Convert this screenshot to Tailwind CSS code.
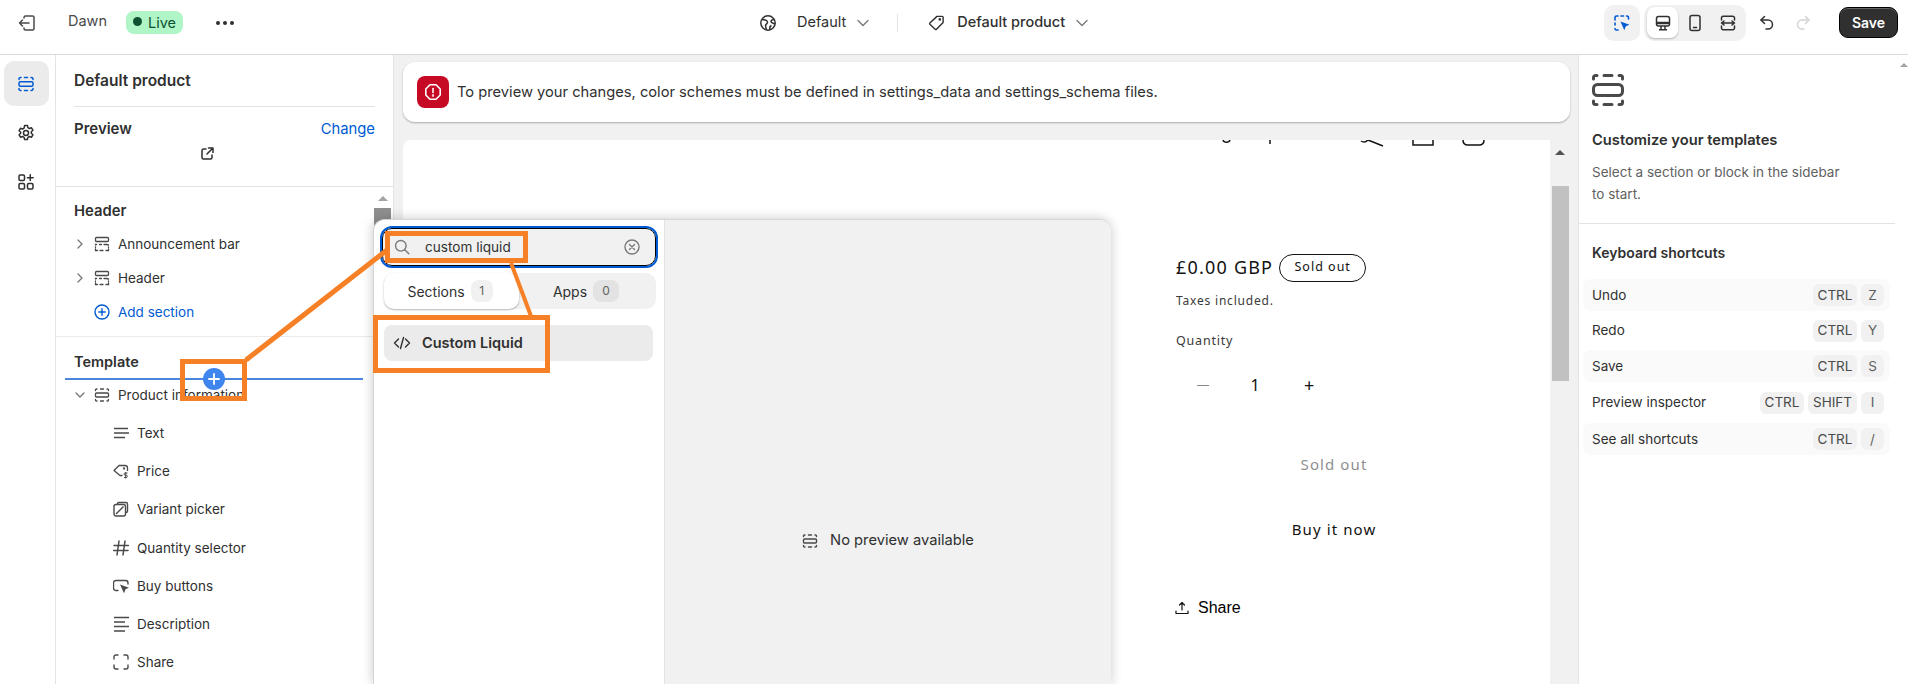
<!DOCTYPE html>
<html lang="en">
<head>
    <meta charset="UTF-8">
    <title>Theme editor</title>
    <script src="https://cdn.jsdelivr.net/npm/@tailwindcss/browser@4"></script>
</head>
<body class="w-[1908px] h-[684px] overflow-hidden bg-white font-['Inter','Liberation_Sans',sans-serif] text-[13.500px] text-[#303030]">

<div class="relative w-[1908px] h-[684px] overflow-hidden">
    <!-- Top bar -->
    <header class="flex items-center h-[55px] pb-[9px] pr-[10px] border-b border-[#d9d9d9] bg-white text-[14.500px]">
        <svg class="ml-[17px] w-[20px] h-[20px]" viewBox="0 0 20 20" fill="none" stroke="#4a4a4a" stroke-width="1.5" stroke-linecap="round" stroke-linejoin="round"><path d="M7 5V4.500A1.500 1.500 0 0 1 8.500 3h7A1.500 1.500 0 0 1 17 4.500v11a1.500 1.500 0 0 1-1.500 1.500h-7A1.500 1.500 0 0 1 7 15.500V15"/><path d="M12 10H2.500M5.500 7l-3 3 3 3"/></svg>
        <span class="ml-[31px] w-[39px] -mt-[3px] text-[#4a4a4a]">Dawn</span>
        <span class="ml-[19px] flex items-center gap-[6px] h-[23px] w-[57px] pl-[7px] rounded-[8px] bg-[#aff5c6] text-[#0c5132]"><i class="w-[9px] h-[9px] rounded-full bg-[#0c5132] -mt-[2px]"></i><span class="mt-[1px]">Live</span></span>
        <span class="ml-[33px] flex gap-[3px]"><i class="w-[4px] h-[4px] rounded-full bg-[#303030]"></i><i class="w-[4px] h-[4px] rounded-full bg-[#303030]"></i><i class="w-[4px] h-[4px] rounded-full bg-[#303030]"></i></span>

        <svg class="ml-[525px] w-[18px] h-[18px]" viewBox="0 0 18 18" fill="none" stroke="#303030" stroke-width="1.500"><circle cx="9" cy="9" r="7.200"/><path d="M3 5.500c2.500 0 5 1 5.500 2.500S6.500 10 6.500 11.500 7.500 15.500 7.500 16M15.500 5.500c-2 0-3.500.5-3.500 2s3 2 3.800 2.500M11 16c-.5-2 0-4 1.500-4.500"/></svg>
        <span class="ml-[20px] -mt-[2px]">Default</span>
        <svg class="ml-[11px] w-[12px] h-[12px]" viewBox="0 0 12 12" fill="none" stroke="#777" stroke-width="1.300" stroke-linecap="round"><path d="M1 3.500l5 5 5-5"/></svg>
        <i class="ml-[28px] w-px h-[18px] bg-[#e3e3e3]"></i>
        <svg class="ml-[30px] w-[17px] h-[17px]" viewBox="0 0 18 18" fill="none" stroke="#303030" stroke-width="1.500" stroke-linejoin="round"><path d="M2 9.500 9.500 2.500H15a1 1 0 0 1 1 1V9l-7 7.200a1 1 0 0 1-1.400 0L2 10.800a1 1 0 0 1 0-1.300z"/><circle cx="12.500" cy="5.700" r=".6"/></svg>
        <span class="ml-[12px] -mt-[2px] font-medium">Default product</span>
        <svg class="ml-[11px] w-[12px] h-[12px]" viewBox="0 0 12 12" fill="none" stroke="#777" stroke-width="1.300" stroke-linecap="round"><path d="M1 3.500l5 5 5-5"/></svg>

        <div class="ml-auto flex items-center justify-center w-[36px] h-[36px] rounded-[10px] bg-[#f1f1f1]">
            <svg class="w-[18px] h-[18px]" viewBox="0 0 18 18" fill="none"><path d="M2 6V3.500A1.500 1.500 0 0 1 3.500 2H5M8 2h2.500M13.500 2h.5a1.500 1.500 0 0 1 1.500 1.500V5M2 9v2M2 14.500A1.500 1.500 0 0 0 3.500 16H5" stroke="#005bd3" stroke-width="1.600" stroke-linecap="round"/><path d="M7.500 7.500l9 3.300-3.700 1.500-1.500 3.900z" fill="#005bd3"/></svg>
        </div>
        <div class="ml-[4px] flex items-center w-[102px] h-[36px] px-[3px] rounded-[10px] bg-[#f1f1f1]">
            <div class="flex items-center justify-center w-[31px] h-[31px] rounded-[8px] bg-white shadow-[0_1px_2px_rgba(0,0,0,0.25)]">
                <svg class="w-[18px] h-[18px]" viewBox="0 0 18 18" fill="none" stroke="#303030" stroke-width="1.500" stroke-linejoin="round"><rect x="2.500" y="2.500" width="13" height="9.500" rx="2"/><path d="M2.500 9h13" stroke-width="2.500"/><path d="M7 12v3.200M11 12v3.200M5 15.700h8"/></svg>
            </div>
            <div class="flex items-center justify-center w-[34px]">
                <svg class="w-[18px] h-[18px]" viewBox="0 0 18 18" fill="none" stroke="#303030" stroke-width="1.500" stroke-linecap="round"><rect x="4" y="1.500" width="10" height="15" rx="2"/><path d="M7.500 13.500h3"/></svg>
            </div>
            <div class="flex items-center justify-center w-[31px]">
                <svg class="w-[18px] h-[18px]" viewBox="0 0 18 18" fill="none" stroke="#303030" stroke-width="1.500" stroke-linecap="round" stroke-linejoin="round"><path d="M2.500 6V4A1.800 1.800 0 0 1 4.300 2.200h9.400A1.800 1.800 0 0 1 15.500 4v2M2.500 12v2a1.800 1.800 0 0 0 1.800 1.800h9.400a1.800 1.800 0 0 0 1.800-1.800v-2"/><path d="M2.500 9h13M5 7l-2.500 2L5 11M13 7l2.500 2-2.500 2"/></svg>
            </div>
        </div>
        <svg class="ml-[12px] w-[18px] h-[18px]" viewBox="0 0 18 18" fill="none" stroke="#303030" stroke-width="1.500" stroke-linecap="round" stroke-linejoin="round"><path d="M6.500 2.500 3 6l3.500 3.500"/><path d="M3 6h7a4.500 4.500 0 0 1 0 9H8"/></svg>
        <svg class="ml-[18px] w-[18px] h-[18px]" viewBox="0 0 18 18" fill="none" stroke="#d4d4d4" stroke-width="1.500" stroke-linecap="round" stroke-linejoin="round"><path d="M11.500 2.500 15 6l-3.500 3.500"/><path d="M15 6H8a4.500 4.500 0 0 0 0 9h2"/></svg>
        <button class="ml-[27px] w-[59px] h-[31px] rounded-[9px] bg-[#303030] border border-black text-[14px] text-white font-semibold shadow-[inset_0_1px_0_rgba(255,255,255,0.25)]">Save</button>
    </header>

    <div class="flex h-[629px]">
        <!-- Icon rail -->
        <nav class="w-[56px] shrink-0 border-r border-[#e3e3e3] flex flex-col items-center pt-[6px] pr-[3px] gap-[4px]">
            <div class="flex items-center justify-center w-[45px] h-[45px] rounded-[10px] bg-[#ebebeb]">
                <svg class="w-[18px] h-[18px]" viewBox="0 0 18 18" fill="none" stroke="#005bd3" stroke-width="1.500" stroke-linecap="round"><path d="M2 4.500V4a1.500 1.500 0 0 1 1.500-1.500H4M7.500 2.500h3M14 2.500h.5A1.500 1.500 0 0 1 16 4v.5M2 13.500v.5a1.500 1.500 0 0 0 1.500 1.500H4M7.500 15.500h3M14 15.500h.5A1.500 1.500 0 0 0 16 14v-.5"/><rect x="2" y="6.800" width="14" height="4.400" rx="1.500"/></svg>
            </div>
            <div class="flex items-center justify-center w-[45px] h-[45px]">
                <svg class="w-[18px] h-[18px]" viewBox="0 0 18 18" fill="none" stroke="#303030" stroke-width="1.500" stroke-linejoin="round"><circle cx="9" cy="9" r="2.500"/><path d="M7.600 1.500h2.800l.5 2.200 1.500.8 2.100-.7 1.400 2.400-1.600 1.500v1.600l1.600 1.500-1.400 2.400-2.100-.7-1.500.8-.5 2.200H7.600l-.5-2.200-1.500-.8-2.100.7-1.400-2.400 1.600-1.500V8.200L2.100 6.700l1.400-2.400 2.100.7 1.500-.8z"/></svg>
            </div>
            <div class="flex items-center justify-center w-[45px] h-[45px]">
                <svg class="w-[18px] h-[18px]" viewBox="0 0 18 18" fill="none" stroke="#303030" stroke-width="1.500" stroke-linecap="round"><rect x="2" y="2" width="5.500" height="5.500" rx="1.200"/><rect x="2" y="10.500" width="5.500" height="5.500" rx="1.200"/><rect x="10.500" y="10.500" width="5.500" height="5.500" rx="1.200"/><path d="M13.250 1.800v5.700M10.400 4.650h5.700"/></svg>
            </div>
        </nav>

        <!-- Sidebar -->
        <aside class="relative w-[338px] shrink-0 border-r border-[#e3e3e3] bg-white">
            <div class="mx-[18px] h-[52px] border-b border-[#e3e3e3] pt-[17px] text-[15.500px] font-semibold leading-[18px]">Default product</div>
            <div class="h-[80px] border-b border-[#e3e3e3] px-[18px] pt-[14px] w-[337px]">
                <div class="flex justify-between font-semibold leading-[16px]"><span class="text-[15px]">Preview</span><span class="font-normal text-[14.800px] text-[#005bd3]">Change</span></div>
                <svg class="ml-[126px] mt-[9px] w-[15px] h-[15px]" viewBox="0 0 15 15" fill="none" stroke="#303030" stroke-width="1.500" stroke-linecap="round" stroke-linejoin="round"><path d="M6 3H3.500A1.500 1.500 0 0 0 2 4.500v7A1.500 1.500 0 0 0 3.500 13h7a1.500 1.500 0 0 0 1.500-1.500V9"/><path d="M7 8l6-6M8.500 2H13v4.500"/></svg>
            </div>
            <div class="h-[150px] border-b border-[#ebebeb]">
                <div class="px-[18px] pt-[15px] font-semibold text-[14.800px] leading-[18px]">Header</div>
                <div class="flex items-center h-[34px] mt-[7px] pl-[19px]">
                    <svg class="w-[10px] h-[10px]" viewBox="0 0 10 10" fill="none" stroke="#777" stroke-width="1.300" stroke-linecap="round"><path d="M3 1l4 4-4 4"/></svg>
                    <svg class="ml-[9px] w-[16px] h-[16px]" viewBox="0 0 16 16" fill="none" stroke="#4a4a4a" stroke-width="1.300" stroke-linecap="round"><rect x="1.500" y="1.500" width="13" height="4" rx="1"/><path d="M1.500 9V8.500h1M5.500 8.500h2M10 8.500h2.500l2 .5M1.500 13v1.500h2M6 14.500h3M12 14.500h2.500V13M1.500 11v.5M14.500 11v.5"/></svg>
                    <span class="ml-[8px]">Announcement bar</span>
                </div>
                <div class="flex items-center h-[34px] pl-[19px]">
                    <svg class="w-[10px] h-[10px]" viewBox="0 0 10 10" fill="none" stroke="#777" stroke-width="1.300" stroke-linecap="round"><path d="M3 1l4 4-4 4"/></svg>
                    <svg class="ml-[9px] w-[16px] h-[16px]" viewBox="0 0 16 16" fill="none" stroke="#4a4a4a" stroke-width="1.300" stroke-linecap="round"><rect x="1.500" y="1.500" width="13" height="4" rx="1"/><path d="M1.500 9V8.500h1M5.500 8.500h2M10 8.500h2.500l2 .5M1.500 13v1.500h2M6 14.500h3M12 14.500h2.500V13M1.500 11v.5M14.500 11v.5"/></svg>
                    <span class="ml-[8px]">Header</span>
                </div>
                <div class="flex items-center h-[34px] pl-[38px] text-[#005bd3]">
                    <svg class="w-[16px] h-[16px]" viewBox="0 0 16 16" fill="none" stroke="#005bd3" stroke-width="1.400" stroke-linecap="round"><circle cx="8" cy="8" r="7"/><path d="M8 4.800v6.400M4.800 8h6.400"/></svg>
                    <span class="ml-[8px]">Add section</span>
                </div>
            </div>
            <div class="px-[18px] pt-[16px] font-semibold text-[14.500px] leading-[18px]">Template</div>
            <div class="flex items-center h-[34px] mt-[7px] pl-[19px]">
                <svg class="w-[10px] h-[10px]" viewBox="0 0 10 10" fill="none" stroke="#777" stroke-width="1.300" stroke-linecap="round"><path d="M1 3l4 4 4-4"/></svg>
                <svg class="ml-[9px] w-[16px] h-[16px]" viewBox="0 0 16 16" fill="none" stroke="#4a4a4a" stroke-width="1.300" stroke-linecap="round"><path d="M1.500 3.500V3a1 1 0 0 1 1-1H3M6.500 2h3M13 2h.5a1 1 0 0 1 1 1v.5M1.500 12.500v.5a1 1 0 0 0 1 1H3M6.500 14h3M13 14h.5a1 1 0 0 0 1-1v-.5"/><rect x="1.500" y="6" width="13" height="4" rx="1"/></svg>
                <span class="ml-[8px]">Product information</span>
            </div>
            <ul class="mt-[2px] pl-[57px]">
                <li class="flex items-center h-[38.200px] gap-[8px]"><svg class="w-[16px] h-[16px]" viewBox="0 0 16 16" fill="none" stroke="#4a4a4a" stroke-width="1.500"><path d="M1 3.500h14M1 8h16M1 12.500h11"/></svg>Text</li>
                <li class="flex items-center h-[38.200px] gap-[8px]"><svg class="w-[16px] h-[16px]" viewBox="0 0 16 16" fill="none" stroke="#4a4a4a" stroke-width="1.300" stroke-linejoin="round"><path d="M9.500 12.500H7L1 7.500 6 2.500h6a2.500 2.500 0 0 1 2.500 2.500v3"/><circle cx="11" cy="5.500" r=".5"/><path d="M14.500 10h-2.300a.9.900 0 0 0 0 2.200h1a.9.900 0 0 1 0 2.300H11M12.700 9v6.500" stroke-width="1"/></svg>Price</li>
                <li class="flex items-center h-[38.200px] gap-[8px]"><svg class="w-[16px] h-[16px]" viewBox="0 0 16 16" fill="none" stroke="#4a4a4a" stroke-width="1.400" stroke-linejoin="round"><path d="M4.500 3V2.500a1.500 1.500 0 0 1 1.500-1h7a1.500 1.500 0 0 1 1.500 1.500v7a1.500 1.500 0 0 1-1.500 1.500"/><rect x="1" y="3.500" width="11.500" height="11.500" rx="2"/><path d="M3 13l7.500-7.500"/></svg>Variant picker</li>
                <li class="flex items-center h-[38.200px] gap-[8px]"><svg class="w-[16px] h-[16px]" viewBox="0 0 16 16" fill="none" stroke="#4a4a4a" stroke-width="1.500" stroke-linecap="round"><path d="M6 1 4 15M12 1l-2 14M1 5.500h14.500M.5 10.500H15"/></svg>Quantity selector</li>
                <li class="flex items-center h-[38.200px] gap-[8px]"><svg class="w-[16px] h-[16px]" viewBox="0 0 16 16" fill="none"><path d="M5 12.500H3a2.500 2.500 0 0 1-2.500-2.500V5A2.500 2.500 0 0 1 3 2.500h9.500A2.500 2.500 0 0 1 15 5v1" stroke="#4a4a4a" stroke-width="1.400" stroke-linecap="round"/><path d="M7 6.500l9 3.300-3.500 1.400-1.500 4z" fill="#4a4a4a"/></svg>Buy buttons</li>
                <li class="flex items-center h-[38.200px] gap-[8px]"><svg class="w-[16px] h-[16px]" viewBox="0 0 16 16" fill="none" stroke="#4a4a4a" stroke-width="1.300"><path d="M1 1.500h15M1 6h11M1 10.500h15M1 15h11"/></svg>Description</li>
                <li class="flex items-center h-[38.200px] gap-[8px]"><svg class="w-[16px] h-[16px]" viewBox="0 0 16 16" fill="none" stroke="#4a4a4a" stroke-width="1.400" stroke-linecap="round"><path d="M1 5V3a2 2 0 0 1 2-2h2M11 1h2a2 2 0 0 1 2 2v2M1 11v2a2 2 0 0 0 2 2h2M11 15h2a2 2 0 0 0 2-2v-2"/></svg>Share</li>
            </ul>
            <!-- sidebar scrollbar, mostly behind the popover -->
            <div class="absolute right-[5px] top-[141px] w-0 h-0 border-x-[5px] border-x-transparent border-b-[5px] border-b-[#a3a3a3]"></div>
            <div class="absolute right-[2px] top-[153px] w-[17px] h-[30px] bg-[#8f8f8f]"></div>
        </aside>

        <!-- Preview -->
        <main class="w-[1185px] shrink-0 bg-[#f1f1f1] pl-[9px] pr-[9px] pt-[7px]">
            <div class="flex items-center h-[60px] rounded-[12px] bg-white shadow-[0_1px_2px_rgba(0,0,0,0.3)] pl-[14px]">
                <span class="flex items-center justify-center w-[32px] h-[32px] rounded-[8px] bg-[#c70a24]">
                    <svg class="w-[18px] h-[18px]" viewBox="0 0 18 18" fill="none" stroke="white" stroke-width="1.600" stroke-linecap="round" stroke-linejoin="round"><path d="M6 1.800h6L16.200 6v6L12 16.200H6L1.800 12V6z"/><path d="M9 5.500v4"/><circle cx="9" cy="12.500" r=".4"/></svg>
                </span>
                <span class="ml-[8px] text-[14.700px] text-[#303030]">To preview your changes, color schemes must be defined in settings_data and settings_schema files.</span>
            </div>
            <div class="relative flex mt-[18px] h-[544px] rounded-t-[8px] bg-white overflow-hidden font-['Noto_Sans',sans-serif] text-[#121212]">
                <div class="relative flex-1">
                    <!-- page header cut off by the top of the frame -->
                    <svg class="absolute left-0 top-0" width="1146" height="8" fill="none" stroke="#121212" stroke-width="1.500">
                        <path d="M820 0c1 3 6 3 7 0M867 0v4"/>
                        <path d="M958 1c3 2 5 1 7-1M965 0l15 6"/>
                        <path d="M1010 0v5h20V0M1060 0c0 3 2 5 5 5h11c3 0 5-2 5-5"/>
                    </svg>
                    <div class="ml-[773px] pt-[114px] w-[330px]">
                        <div class="flex items-center h-[27px]">
                            <span class="text-[18px] tracking-[1.200px] leading-[27px]">£0.00 GBP</span>
                            <span class="ml-[6px] flex items-center justify-center w-[87px] h-[28px] rounded-full border border-[#121212] text-[12.500px] tracking-[1px]">Sold out</span>
                        </div>
                        <p class="mt-[11px] text-[12px] tracking-[0.800px] leading-[18px] text-[#3a3a3a]">Taxes included.</p>
                        <p class="mt-[22px] text-[12.500px] tracking-[0.800px] leading-[18px] text-[#3a3a3a]">Quantity</p>
                        <div class="flex items-center h-[36px] mt-[17px] text-[14px]">
                            <span class="w-[12px] h-px ml-[21px] bg-[#8a8a8a]"></span>
                            <span class="ml-[37px] w-[18px] text-center text-[16px]">1</span>
                            <span class="ml-[40px] text-[18px] leading-none">+</span>
                        </div>
                        <p class="mt-[50px] w-[316px] text-center text-[15px] tracking-[1.100px] leading-[22px] text-[#8f8f8f]">Sold out</p>
                        <p class="mt-[43px] w-[316px] text-center text-[15px] tracking-[1.100px] leading-[22px]">Buy it now</p>
                        <div class="flex items-center -ml-[1px] mt-[56px] font-['Liberation_Sans',sans-serif] text-[16px] text-black">
                            <svg class="w-[14px] h-[14px]" viewBox="0 0 14 14" fill="none" stroke="#121212" stroke-width="1.200" stroke-linecap="round" stroke-linejoin="round"><path d="M7 9V1.500M4.500 4 7 1.500 9.500 4M1 10v2.500h12V10"/></svg>
                            <span class="ml-[9px]">Share</span>
                        </div>
                    </div>
                </div>
                <!-- frame scrollbar -->
                <div class="relative w-[20px] bg-[#f1f1f1]">
                    <div class="absolute left-[5px] top-[10px] w-0 h-0 border-x-[5px] border-x-transparent border-b-[5px] border-b-[#505050]"></div>
                    <div class="absolute left-[2px] top-[46px] w-[17px] h-[195px] bg-[#c1c1c1]"></div>
                </div>
            </div>
        </main>

        <!-- Right panel -->
        <aside class="relative flex-1 bg-white border-l border-[#e3e3e3] -ml-[1px]">
            <div class="pl-[13px] pt-[19px]">
                <svg class="w-[32px] h-[32px]" viewBox="0 0 32 32" fill="none" stroke="#4a4a4a" stroke-width="3" stroke-linecap="round"><path d="M1.500 5V3.500a2 2 0 0 1 2-2H5M12 1.500h8M27 1.500h1.500a2 2 0 0 1 2 2V5M1.500 27v1.500a2 2 0 0 0 2 2H5M12 30.500h8M27 30.500h1.500a2 2 0 0 0 2-2V27"/><rect x="1.500" y="10.500" width="29" height="11" rx="4"/></svg>
                <h3 class="mt-[25px] text-[14.700px] font-semibold leading-[18px]">Customize your templates</h3>
                <p class="mt-[12px] leading-[22px] text-[#616161]">Select a section or block in the sidebar<br>to start.</p>
            </div>
            <div class="mt-[18px] w-[316px] border-t border-[#e3e3e3]"></div>
            <h3 class="ml-[13px] mt-[20px] text-[14px] font-semibold leading-[18px]">Keyboard shortcuts</h3>
            <ul class="ml-[4px] mt-[17px] w-[307px]">
                <li class="flex items-center h-[32px] mb-[2.500px] pl-[9px] pr-[6px] rounded-[8px] bg-[#fafafa]"><span class="flex-1">Undo</span><kbd class="flex items-center justify-center w-[44px] h-[22px] rounded-[6px] bg-[#f1f1f1] font-['Inter',sans-serif] text-[#4a4a4a]">CTRL</kbd><kbd class="flex items-center justify-center ml-[4px] w-[23px] h-[22px] rounded-[6px] bg-[#f1f1f1] font-['Inter',sans-serif] text-[#616161]">Z</kbd></li>
                <li class="flex items-center h-[34px] mb-[2.500px] pl-[9px] pr-[6px]"><span class="flex-1">Redo</span><kbd class="flex items-center justify-center w-[44px] h-[22px] rounded-[6px] bg-[#f1f1f1] font-['Inter',sans-serif] text-[#4a4a4a]">CTRL</kbd><kbd class="flex items-center justify-center ml-[4px] w-[23px] h-[22px] rounded-[6px] bg-[#f1f1f1] font-['Inter',sans-serif] text-[#616161]">Y</kbd></li>
                <li class="flex items-center h-[32px] mb-[2.500px] pl-[9px] pr-[6px] rounded-[8px] bg-[#fafafa]"><span class="flex-1">Save</span><kbd class="flex items-center justify-center w-[44px] h-[22px] rounded-[6px] bg-[#f1f1f1] font-['Inter',sans-serif] text-[#4a4a4a]">CTRL</kbd><kbd class="flex items-center justify-center ml-[4px] w-[23px] h-[22px] rounded-[6px] bg-[#f1f1f1] font-['Inter',sans-serif] text-[#616161]">S</kbd></li>
                <li class="flex items-center h-[36px] mb-[2.500px] pl-[9px] pr-[6px]"><span class="flex-1">Preview inspector</span><kbd class="flex items-center justify-center w-[44px] h-[22px] rounded-[6px] bg-[#f1f1f1] font-['Inter',sans-serif] text-[#4a4a4a]">CTRL</kbd><kbd class="flex items-center justify-center ml-[4px] w-[49px] h-[22px] rounded-[6px] bg-[#f1f1f1] font-['Inter',sans-serif] text-[#4a4a4a]">SHIFT</kbd><kbd class="flex items-center justify-center ml-[4px] w-[23px] h-[22px] rounded-[6px] bg-[#f1f1f1] font-['Inter',sans-serif] text-[#616161]">I</kbd></li>
                <li class="flex items-center h-[32px] pl-[9px] pr-[6px] rounded-[8px] bg-[#fafafa]"><span class="flex-1">See all shortcuts</span><kbd class="flex items-center justify-center w-[44px] h-[22px] rounded-[6px] bg-[#f1f1f1] font-['Inter',sans-serif] text-[#4a4a4a]">CTRL</kbd><kbd class="flex items-center justify-center ml-[4px] w-[23px] h-[22px] rounded-[6px] bg-[#f1f1f1] font-['Inter',sans-serif] text-[#616161]">/</kbd></li>
            </ul>
            <div class="absolute right-[0px] top-[8px] w-0 h-0 border-x-[4px] border-x-transparent border-b-[4px] border-b-[#a3a3a3]"></div>
        </aside>
    </div>

    <!-- Add section popover -->
    <div class="absolute left-[373px] top-[219px] flex w-[738px] h-[465px] rounded-t-[12px] overflow-hidden bg-white border-l border-t border-[#d5d5d5] shadow-[0_0_12px_rgba(0,0,0,0.22)] z-10">
        <div class="w-[291px] shrink-0 border-r border-[#e3e3e3] pl-[8px]">
            <div class="flex items-center w-[274px] h-[38px] mt-[8px] rounded-[10px] bg-[#f1f1f1] border border-black outline-2 outline-[#005bd3] pl-[11px]">
                <svg class="w-[16px] h-[16px]" viewBox="0 0 16 16" fill="none" stroke="#7a7a7a" stroke-width="1.400" stroke-linecap="round"><circle cx="6.800" cy="6.800" r="5.300"/><path d="M10.800 10.800l4 4"/></svg>
                <span class="ml-[15px] flex-1 text-[13.600px]">custom liquid</span>
                <svg class="mr-[15px] w-[16px] h-[16px]" viewBox="0 0 16 16" fill="none" stroke="#7a7a7a" stroke-width="1.400" stroke-linecap="round"><circle cx="8" cy="8" r="7"/><path d="M5.500 5.500l5 5M10.500 5.500l-5 5"/></svg>
            </div>
            <div class="flex w-[272px] h-[36px] mt-[7px] ml-[2px] rounded-[10px] bg-[#f1f1f1] text-[14px]">
                <div class="flex items-center justify-center gap-[6px] w-[135px] pr-[3px] rounded-[10px] bg-white shadow-[0_1px_2px_rgba(0,0,0,0.3)]">Sections<span class="flex items-center justify-center w-[22px] h-[22px] rounded-[8px] bg-[#f1f1f1] text-[12px] text-[#616161]">1</span></div>
                <div class="flex flex-1 items-center justify-center gap-[6px] pr-[3px]">Apps<span class="flex items-center justify-center w-[26px] h-[22px] rounded-[8px] bg-[#e3e3e3] text-[12px] text-[#616161]">0</span></div>
            </div>
            <div class="flex items-center w-[269px] h-[36px] mt-[16px] ml-[2px] rounded-[8px] bg-[#ebebeb] pl-[9px]">
                <svg class="w-[18px] h-[18px]" viewBox="0 0 18 18" fill="none" stroke="#303030" stroke-width="1.400" stroke-linecap="round" stroke-linejoin="round"><path d="M5.500 5 1.500 9l4 4M12.500 5l4 4-4 4M10.500 3.500 7.500 14.500"/></svg>
                <span class="ml-[11px] text-[14.500px] font-semibold">Custom Liquid</span>
            </div>
        </div>
        <div class="flex flex-1 items-center justify-center gap-[12px] bg-[#f1f1f1] pt-[177px] text-[14.700px]">
            <svg class="w-[16px] h-[16px]" viewBox="0 0 16 16" fill="none" stroke="#4a4a4a" stroke-width="1.400" stroke-linecap="round"><path d="M1.500 3.500V3a1 1 0 0 1 1-1H3M6.500 2h3M13 2h.5a1 1 0 0 1 1 1v.5M1.500 12.500v.5a1 1 0 0 0 1 1H3M6.500 14h3M13 14h.5a1 1 0 0 0 1-1v-.5"/><rect x="1.500" y="6" width="13" height="4" rx="1"/></svg>
            <span>No preview available</span>
        </div>
    </div>

    <!-- Insertion marker -->
    <div class="absolute left-[65px] top-[378px] w-[298px] h-[2px] bg-[#4a86e0] z-10"></div>
    <div class="absolute left-[203px] top-[368px] flex items-center justify-center w-[22px] h-[22px] rounded-full bg-[#3f85ee] z-10">
        <svg class="w-[12px] h-[12px]" viewBox="0 0 12 12" fill="none" stroke="white" stroke-width="1.800" stroke-linecap="round"><path d="M6 1v10M1 6h10"/></svg>
    </div>

    <!-- Orange annotations drawn on the screenshot -->
    <svg class="absolute left-0 top-0 z-20 pointer-events-none" width="1908" height="684" fill="none" stroke="#f58025">
        <rect x="182.500" y="361.500" width="62" height="37" stroke-width="5"/>
        <rect x="387.500" y="233.500" width="138" height="27" stroke-width="5"/>
        <rect x="375.500" y="317.500" width="172" height="53" stroke-width="5"/>
        <path d="M246 360 387 250" stroke-width="5"/>
        <path d="M511 263 531 316" stroke-width="4"/>
    </svg>
</div>

</body>
</html>
